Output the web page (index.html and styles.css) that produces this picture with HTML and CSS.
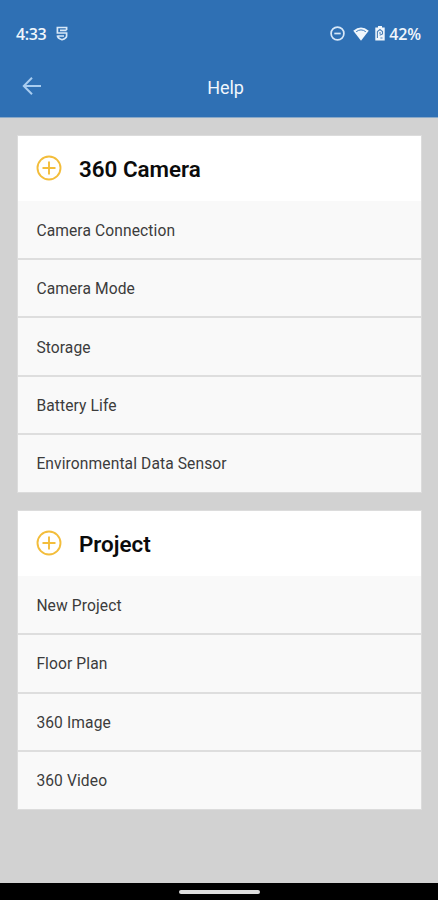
FILE: index.html
```html
<!DOCTYPE html>
<html lang="en">
<head>
<meta charset="utf-8">
<meta name="viewport" content="width=device-width, initial-scale=1">
<title>Help</title>
<link rel="stylesheet" href="styles.css">
</head>
<body>
<div class="screen">
  <header class="top">
    <div class="status">
      <span class="clock">4:33</span>
      <svg class="shield" width="12" height="15" viewBox="0 0 12 15"><path d="M10.6 4V1.5H1.4V7H10.6V10Q10.6 12.3 6 13.7Q1.4 12.3 1.4 9.6M4 4.3H10.6M1.4 10H8"/></svg>
      <div class="indicators">
        <svg class="dnd" width="15" height="15" viewBox="0 0 15 15"><circle cx="7.5" cy="7.5" r="6.4"/><path d="M4.3 7.5H10.7"/></svg>
        <svg class="wifi" width="16" height="14" viewBox="0 0 18 14" preserveAspectRatio="none"><path class="fill" d="M.3 3.8Q9-3 17.7 3.8L9 13.7Z"/><path class="arc" d="M3.6 4.7Q9 1.1 14.4 4.7"/></svg>
        <svg class="battery" width="10" height="15" viewBox="0 0 10 15"><path class="fill" d="M3 0H7V1.5H9.7V14.5H.3V1.5H3Z"/><path class="mark" d="M2.4 12V5.5L5 3.5L7.5 5.5V8L4.6 9.3M5 6V8M5.4 12H7.5"/></svg>
        <span class="percent">42%</span>
      </div>
    </div>
    <nav class="bar">
      <svg class="back" width="20" height="20" viewBox="0 0 20 20"><path d="M19 10H2M10 1.8L1.8 10L10 18.2"/></svg>
      <h1>Help</h1>
    </nav>
  </header>
  <main>
    <section class="card">
      <div class="head">
        <svg class="plus" width="26" height="26" viewBox="0 0 26 26"><circle cx="13" cy="13" r="11.5"/><path d="M13 6.5V19.5M6.5 13H19.5"/></svg>
        <h2>360 Camera</h2>
      </div>
      <ul>
        <li>Camera Connection</li>
        <li>Camera Mode</li>
        <li>Storage</li>
        <li>Battery Life</li>
        <li>Environmental Data Sensor</li>
      </ul>
    </section>
    <section class="card project">
      <div class="head">
        <svg class="plus" width="26" height="26" viewBox="0 0 26 26"><circle cx="13" cy="13" r="11.5"/><path d="M13 6.5V19.5M6.5 13H19.5"/></svg>
        <h2>Project</h2>
      </div>
      <ul>
        <li>New Project</li>
        <li>Floor Plan</li>
        <li>360 Image</li>
        <li>360 Video</li>
      </ul>
    </section>
  </main>
  <footer><span class="handle"></span></footer>
</div>
</body>
</html>
```
FILE: styles.css
```css
* { box-sizing: border-box; }
body { margin: 0; font-family: Roboto, "Liberation Sans", sans-serif; }
h1, h2, ul { margin: 0; padding: 0; }
svg { display: block; fill: none; flex: none; }
.screen { width: 438px; height: 900px; display: flex; flex-direction: column; background: #d2d2d2; overflow: hidden; }
.top { height: 118px; background: #2f70b4; color: #f0f6fc; flex: none; border-bottom: 1px solid #8aa9c8; }
.status { height: 58px; padding: 9px 17px 0 16px; display: flex; align-items: center; font-family: "Open Sans", sans-serif; font-weight: 600; font-size: 16px; }
.clock { width: 40px; letter-spacing: -.4px; }
.indicators { margin-left: auto; display: flex; align-items: center; }
.shield path, .dnd { stroke: #d8e8f8; stroke-width: 1.7; }
.dnd { margin-right: 8px; }
.wifi { margin-right: 6px; }
.fill { fill: #f0f6fc; }
.arc { stroke: #2f70b4; stroke-width: 1; }
.mark { stroke: #4c80b8; stroke-width: 1.1; }
.battery { margin-right: 4px; }
.percent { letter-spacing: -.1px; }
.bar { height: 58px; display: grid; grid-template-columns: 20px 1fr 20px; align-items: center; padding: 0 9px 0 22px; }
.back { stroke: #a9cdf0; stroke-width: 2; margin-top: -2px; }
h1 { text-align: center; font-size: 18px; font-weight: 400; letter-spacing: -.15px; padding-top: 1px; }
main { flex: 1; padding: 18px 17.5px 0 18px; }
.card { background: #f9f9f9; outline: 1px solid #dcdcdc; }
.project { margin-top: 18.6px; }
.head { height: 65px; display: flex; align-items: center; gap: 17px; padding-left: 18px; background: #fff; color: #0b0b0b; }
.card:first-child .head { padding-bottom: 1px; }
.project .head { height: 65.6px; padding-bottom: 1px; }
.plus { stroke: #f3bd3b; stroke-width: 1.9; }
h2 { font-size: 22.4px; font-weight: 600; padding-top: 2px; }
ul { list-style: none; }
li { height: 58.3px; display: flex; align-items: center; padding: 2px 18px 0 18.4px; font-size: 15.6px; letter-spacing: .1px; color: #3c3c3c; border-bottom: 2px solid #dedede; }
li:first-child { height: 59.1px; padding-top: 3px; }
li:last-child { height: 57px; border-bottom: 0; }
footer { height: 17px; background: #000; display: flex; align-items: center; justify-content: center; padding-top: 1px; }
.handle { width: 81px; height: 4px; border-radius: 2px; background: #dedede; }
```
